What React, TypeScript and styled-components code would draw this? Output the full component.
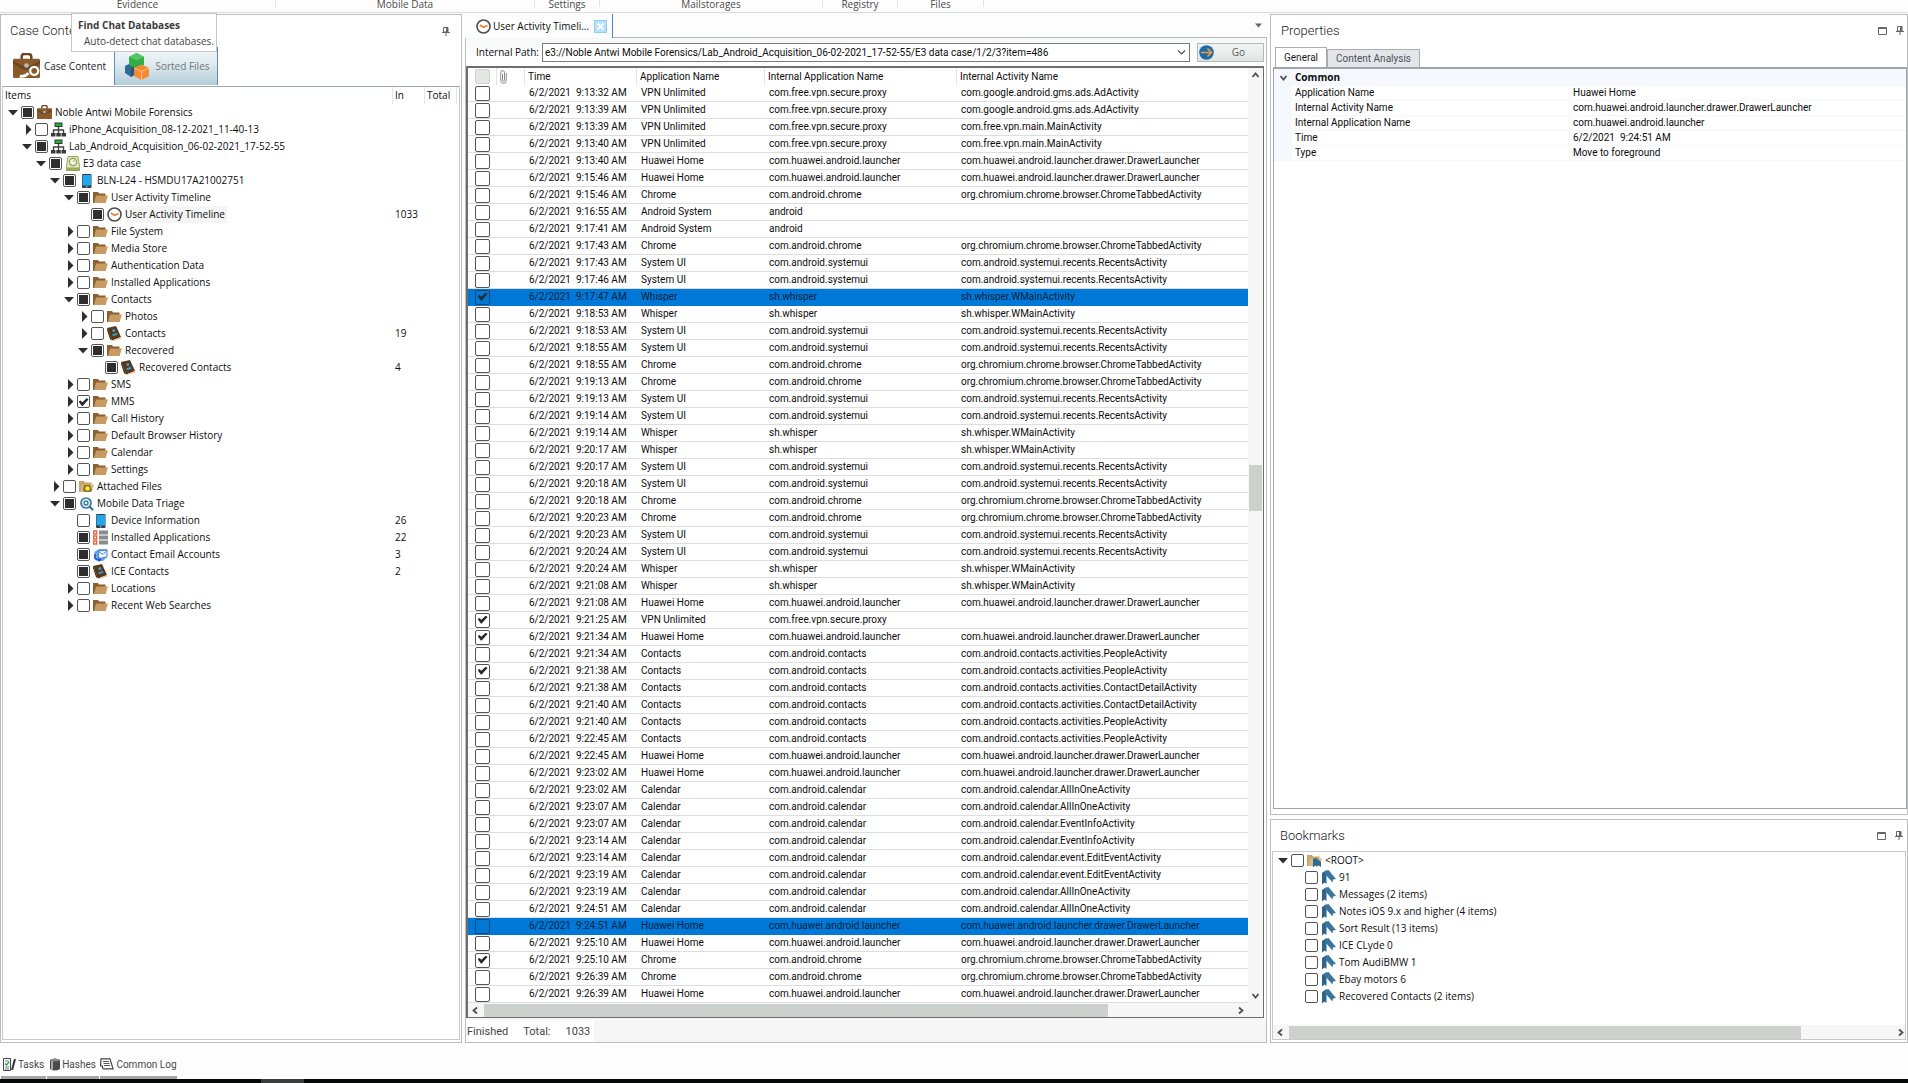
import React, { useEffect, useRef } from 'react';
import styled, { createGlobalStyle, css } from 'styled-components';

const uiFont = '"Open Sans", "Noto Sans", sans-serif';
const gridFont = 'Roboto, "Open Sans", sans-serif';

const GlobalStyle = createGlobalStyle`
  *, *::before, *::after { box-sizing: border-box; }
  body { margin: 0; background: #fdfdfd; color: #0c0c0c; font: 10px/17px ${uiFont}; }
  button, select, input { font: inherit; color: inherit; margin: 0; padding: 0; }
  button { background: none; border: 0; display: flex; align-items: center; justify-content: center; white-space: nowrap; }
  table { border-collapse: separate; border-spacing: 0; }
  ul { list-style: none; margin: 0; padding: 0; }
`;

/* ---------- shell ---------- */

const Page = styled.div`
  min-height: 100vh;
  display: flex;
  flex-direction: column;
  position: relative;
`;

const Ribbon = styled.nav`
  height: 13px;
  display: flex;
  border-bottom: 1px solid #dcdcdc;
`;

const RibbonGroup = styled.div<{ $w: number }>`
  width: ${p => p.$w}px;
  height: 7px;
  border-right: 1px solid #e2e2e2;
  text-align: center;
  line-height: 8px;
  color: #4c4c4c;
`;

const Main = styled.main`
  flex: 1;
  display: grid;
  grid-template-columns: 462px minmax(0, 1fr) 638px;
  column-gap: 3px;
  padding-top: 1px;
`;

const Panel = styled.section`
  display: flex;
  flex-direction: column;
  border: 1px solid #bdbdbd;
  padding: 0 1px 2px;
  background: #fff;
  min-height: 0;
`;

const PanelHead = styled.header<{ $wide?: boolean }>`
  height: ${p => (p.$wide ? 32 : 31)}px;
  display: flex;
  align-items: center;
  gap: 9px;
  padding: 0 ${p => (p.$wide ? 10 : 3)}px 0 8px;
`;

const PanelTitle = styled.h2`
  flex: 1;
  margin: 0;
  font: 300 13px/20px ${gridFont};
  color: #222;
`;

const Tooltip = styled.div`
  position: absolute;
  left: 71px;
  top: 13px;
  width: 146px;
  height: 39px;
  padding: 3px 6px;
  background: #fff;
  border: 1px solid #c6c6c6;
  color: #444;
  white-space: nowrap;
  strong { display: block; line-height: 16px; color: #3c3c3c; }
  span { display: block; padding-left: 6px; }
`;

/* ---------- check box ---------- */

const Box = styled.input<{ $w: number; $partial?: boolean; $onBlue?: boolean }>`
  appearance: none;
  flex: none;
  display: block;
  width: ${p => p.$w}px;
  height: ${p => (p.$w > 13 ? 15 : 13)}px;
  border: 1px solid ${p => (p.$onBlue ? '#1d4566' : '#555')};
  border-radius: 2px;
  background: ${p => (p.$onBlue ? 'transparent' : '#fff')};
  &:disabled { background: #e4e8e5; border-color: #cfd3d0; }
  &:checked::before {
    content: '';
    display: block;
    width: 10px;
    height: 8px;
    margin: 2px auto;
    background: #2a2a2a;
    clip-path: polygon(0 45%, 20% 30%, 38% 52%, 84% 0, 100% 18%, 42% 100%, 34% 100%);
  }
  ${p => p.$partial && css`
    &::before {
      content: '';
      display: block;
      width: 9px;
      height: 9px;
      margin: 1px auto;
      background: #2e2e2e;
    }
  `}
`;

type State = 'off' | 'on' | 'part';

function Check({ state = 'off', w = 13, id, label, onBlue, disabled }: {
  state?: State; w?: number; id?: string; label?: string; onBlue?: boolean; disabled?: boolean;
}) {
  const ref = useRef<HTMLInputElement>(null);
  useEffect(() => { if (ref.current) ref.current.indeterminate = state === 'part'; }, [state]);
  return (
    <Box ref={ref} type="checkbox" id={id} aria-label={label} $w={w} $partial={state === 'part'}
      $onBlue={onBlue} defaultChecked={state === 'on'} disabled={disabled} />
  );
}

/* ---------- icons ---------- */

const Svg = styled.svg`display: block; flex: none;`;

const Case = ({ size = 15 }: { size?: number }) => (
  <Svg width={size} height={size} viewBox="0 0 28 28">
    <path d="M9 7V4q0-3 3-3h4q3 0 3 3v3" fill="none" stroke="#6b4423" strokeWidth="2.6" />
    <rect x="0" y="6" width="28" height="20" rx="1.5" fill="#8a5a2b" />
    <path d="M0 8l11 6h6l11-6v3l-11 6H11L0 11z" fill="#6b4423" />
    <circle cx="14" cy="13" r="2.4" fill="#b8b8b8" />
    {size > 20 && <path d="M7 24q5 1 9-3" stroke="#fff" strokeWidth="3" fill="none" />}
    {size > 20 && <circle cx="22" cy="18.500" r="4.200" fill="#8a5a2b" stroke="#fff" strokeWidth="2.400" />}
  </Svg>
);

const Cubes = () => (
  <Svg width="24" height="27" viewBox="0 0 24 27">
    <path d="M0 13l6-3 6 3v7l-6 4-6-4z" fill="#2f6a94" />
    <path d="M6 15l6-3v8l-6 4z" fill="#24557a" />
    <path d="M4 4l7.500-4L19 4v8l-7.500 4L4 12z" fill="#35ad46" />
    <path d="M4 4l7.500 3.500L19 4l-7.500-4z" fill="#52c660" />
    <path d="M9 15l7.500-3.500L24 15v8l-7.500 4L9 23z" fill="#f58a32" />
    <path d="M9 15l7.500 3.500L24 15M16.500 18.500V27" stroke="#ffc08a" fill="none" />
  </Svg>
);

const Network = () => (
  <Svg width="15" height="15" viewBox="0 0 15 15">
    <path d="M7.500 4v4M2.500 11V8h10v3M7.500 8v3" stroke="#444" strokeWidth="1.400" fill="none" />
    <rect x="4" y="1" width="7" height="3.500" fill="#19b52b" stroke="#333" />
    <path d="M0 11h4.500v3.500H0zM5.300 11h4.500v3.500H5.300zM10.500 11H15v3.500h-4.500z" fill="#3a3a3a" />
  </Svg>
);

const Disk = () => (
  <Svg width="14" height="15" viewBox="0 0 14 15">
    <path d="M2 .500h10l1.500 10v4H.500v-4z" fill="#dfe6bd" stroke="#96a85a" />
    <path d="M.500 11.500h13v3H.500z" fill="#9cab5f" />
    <circle cx="7" cy="6" r="3.600" fill="#f4f6e6" stroke="#8fa252" strokeWidth="1.200" />
    <path d="M7 6l2-2.500" stroke="#8fa252" />
  </Svg>
);

const Phone = () => (
  <Svg width="15" height="15" viewBox="0 0 15 15">
    <rect x="3" y="1" width="9.500" height="14" rx="1" fill="#33404a" />
    <rect x="3.500" y="2" width="8.500" height="10.500" fill="#22a6ee" />
    <circle cx="7.700" cy="13.700" r=".7" fill="#c9d6de" />
  </Svg>
);

const Folder = ({ mark }: { mark?: 'star' | 'book' }) => (
  <Svg width="15" height="13" viewBox="0 0 15 13">
    <path d="M0 1h5l1 1.500h6.500V12H0z" fill={mark ? '#c9a36e' : '#8b5f33'} />
    <path d="M3 4.500h12L12.500 12H1z" fill={mark ? '#d9b885' : '#c79b62'} />
    {mark === 'star' && <path d="M5 5h6l2 5-2 2H6L4 10z" fill="#7d7138" />}
    {mark === 'star' && <circle cx="8.500" cy="8.500" r="2.300" fill="#f4ee1b" />}
    {mark === 'book' && <path d="M6 5l3-1 5 4v5l-3-2-1 2-2-2-1 2H6z" fill="#2f6c91" />}
  </Svg>
);

const Clock = () => (
  <Svg width="15" height="15" viewBox="0 0 15 15">
    <circle cx="7.500" cy="7.500" r="6.500" fill="#fff" stroke="#4c4c4c" strokeWidth="1.600" />
    <path d="M3.800 6l3.700 2.300L11.500 6.500" fill="none" stroke="#ef7d2d" strokeWidth="1.600" />
  </Svg>
);

const Book = () => (
  <Svg width="15" height="15" viewBox="0 0 15 15">
    <path d="M0 2L9 0l5 11-9 3.500z" fill="#5b3717" />
    <path d="M5 14.500l9-3.500.500 1.500-9 2.500z" fill="#d8c7a9" />
    <path d="M0 2l5 12.500L3 13 0 4z" fill="#39210c" />
    <circle cx="6.800" cy="4.500" r="1.600" fill="#2aa0cf" />
    <path d="M5 8.500l4.800-1.800.7 2-4.500 1.500z" fill="#2aa0cf" />
  </Svg>
);

const Search = () => (
  <Svg width="14" height="14" viewBox="0 0 14 14">
    <circle cx="6" cy="6" r="5" fill="#e7f2f8" stroke="#36789c" strokeWidth="1.700" />
    <circle cx="6" cy="6" r="2" fill="none" stroke="#36789c" strokeWidth="1.300" />
    <path d="M9.500 9.500L13 13" stroke="#36789c" strokeWidth="2.400" />
  </Svg>
);

const Apps = () => (
  <Svg width="15" height="15" viewBox="0 0 15 15">
    <path d="M.700 1h3v3h-3zM.700 6h3v3h-3zM.700 11h3v3h-3z" fill="#fff" stroke="#ee6039" strokeWidth="1.300" />
    <path d="M6 .500h9v4H6zM6 5.500h9v4H6zM6 10.500h9v4H6z" fill="#8b8b8b" />
  </Svg>
);

const Mail = () => (
  <Svg width="14" height="14" viewBox="0 0 14 14">
    <path d="M0 4l5-3 8 0v8l-4 4-7-1z" fill="#6ea6e6" />
    <path d="M4 3l9-1v7l-8 1.500z" fill="#f2f8ff" stroke="#3f7fd1" />
    <path d="M4.500 3.500L9 6.500l4-4" fill="none" stroke="#3f7fd1" />
    <path d="M1 6v4q1 2 4 2" fill="none" stroke="#1d5ed0" strokeWidth="1.800" />
    <path d="M4.500 9.500L8 12l-3.500 2z" fill="#1d5ed0" />
  </Svg>
);

const Ribbons = () => (
  <Svg width="14" height="15" viewBox="0 0 14 15">
    <path d="M0 3L4.500 0v14L2.500 12.500 0 14.500z" fill="#2d6487" />
    <path d="M3 1L6.500 0 14 9l-3 .500-.500 3L3 4z" fill="#3a769b" />
  </Svg>
);

const Pin = () => (
  <Svg width="8" height="9" viewBox="0 0 8 9">
    <path d="M1.500 .500h4.500v4.500H1.500zM0 5.500h8M4 5.500V9" fill="none" stroke="#666" />
    <path d="M4 .500h2V5H4z" fill="#666" />
  </Svg>
);

const Float = () => (
  <Svg width="9" height="8" viewBox="0 0 9 8">
    <path d="M.500 .500h8v7h-8zM.500 1.500h8" fill="none" stroke="#666" />
  </Svg>
);

const Clip = () => (
  <Svg width="7" height="14" viewBox="0 0 7 14">
    <path d="M2.500 4v6q0 1.200 1 1.200t1-1.200V2.500Q4.500.700 2.600.700T.700 2.500v8q0 2.800 2.800 2.800t2.800-2.800V3" fill="none" stroke="#8a8a8a" />
  </Svg>
);

const GoArrow = () => (
  <Svg width="15" height="15" viewBox="0 0 15 15">
    <circle cx="7.500" cy="7.500" r="7.300" fill="#1c6aa8" />
    <path d="M2 7.500h10M8.500 3.500l4 4-4 4" fill="none" stroke="#f59a3c" strokeWidth="1.700" />
  </Svg>
);

const turns = { up: 180, down: 0, left: 90, right: -90 };

const Chevron = ({ dir, strong }: { dir: keyof typeof turns; strong?: boolean }) => (
  <Svg width="9" height="9" viewBox="0 0 9 9">
    <path d={strong ? 'M1.500 3l3 3.500 3-3.500' : 'M1 2.500l3.500 3.500 3.500-3.500'} transform={`rotate(${turns[dir]} 4.500 4.500)`} fill="none" stroke="#505050" strokeWidth={strong ? 1.8 : 1.1} />
  </Svg>
);

const Triangle = ({ open }: { open: boolean }) => (
  <Svg width="10" height="11" viewBox="0 0 10 11">
    <path d={open ? 'M0 3h10L5 8.500z' : 'M4 0l5.500 5.500L4 11z'} fill="#2e2e2e" />
  </Svg>
);

const TasksIcon = () => (
  <Svg width="13" height="13" viewBox="0 0 13 13">
    <path d="M.500 .500h7v12h-7z" fill="#fff" stroke="#444" />
    <path d="M2 3h4M2 9h4M2 11h4" stroke="#777" />
    <path d="M2 5.500l1.500 1.500L6 4" stroke="#25a046" fill="none" strokeWidth="1.400" />
    <path d="M9 12l3-11" stroke="#333" strokeWidth="2" />
  </Svg>
);

const HashIcon = () => (
  <Svg width="10" height="13" viewBox="0 0 10 13">
    <path d="M0 2q5-3 10 0v9q-5 3-10 0z" fill="#4b4b4b" />
    <path d="M1 2.500q1 .500 2 .600v9l-2-.600z" fill="#a9a9a9" />
    <ellipse cx="5" cy="2" rx="4.500" ry="1.300" fill="#8b8b8b" />
  </Svg>
);

const LogIcon = () => (
  <Svg width="14" height="12" viewBox="0 0 14 12">
    <path d="M1 .800h9l3 10H4.500Q2 11 2.500 8H.500z" fill="#fff" stroke="#444" strokeWidth="1.200" />
    <path d="M3 3.500h6M3.500 5.500h6M4 7.500h6" stroke="#555" />
  </Svg>
);

const icons: Record<string, React.ReactNode> = {
  case: <Case />, net: <Network />, disk: <Disk />, phone: <Phone />, folder: <Folder />,
  clock: <Clock />, book: <Book />, attach: <Folder mark="star" />, search: <Search />,
  apps: <Apps />, mail: <Mail />, root: <Folder mark="book" />, ribbon: <Ribbons />,
};

/* ---------- trees ---------- */

const TreeRow = styled.li<{ $level: number }>`
  height: 17px;
  display: flex;
  align-items: center;
  padding-left: ${p => p.$level * 14}px;
  white-space: nowrap;
`;

const Twisty = styled.button`
  width: 10px;
  height: 11px;
  margin: 0 3px 0 5px;
`;

const IconCell = styled.span`
  width: 15px;
  margin: 0 3px;
  display: flex;
  justify-content: center;
`;

const NodeLabel = styled.label<{ $current?: boolean }>`
  padding-right: 2px;
  background: ${p => (p.$current ? '#f5f5f5' : 'none')};
`;

const Count = styled.span`
  margin-left: auto;
  width: 64px;
`;

type Node = { level: number; open: 'y' | 'n' | '-'; state: State; icon: string; text: string; count?: string };

const caseTree: Node[] = [
  { level: 0, open: 'y', state: 'part', icon: 'case', text: 'Noble Antwi Mobile Forensics' },
  { level: 1, open: 'n', state: 'off', icon: 'net', text: 'iPhone_Acquisition_08-12-2021_11-40-13' },
  { level: 1, open: 'y', state: 'part', icon: 'net', text: 'Lab_Android_Acquisition_06-02-2021_17-52-55' },
  { level: 2, open: 'y', state: 'part', icon: 'disk', text: 'E3 data case' },
  { level: 3, open: 'y', state: 'part', icon: 'phone', text: 'BLN-L24 - HSMDU17A21002751' },
  { level: 4, open: 'y', state: 'part', icon: 'folder', text: 'User Activity Timeline' },
  { level: 5, open: '-', state: 'part', icon: 'clock', text: 'User Activity Timeline', count: '1033' },
  { level: 4, open: 'n', state: 'off', icon: 'folder', text: 'File System' },
  { level: 4, open: 'n', state: 'off', icon: 'folder', text: 'Media Store' },
  { level: 4, open: 'n', state: 'off', icon: 'folder', text: 'Authentication Data' },
  { level: 4, open: 'n', state: 'off', icon: 'folder', text: 'Installed Applications' },
  { level: 4, open: 'y', state: 'part', icon: 'folder', text: 'Contacts' },
  { level: 5, open: 'n', state: 'off', icon: 'folder', text: 'Photos' },
  { level: 5, open: 'n', state: 'off', icon: 'book', text: 'Contacts', count: '19' },
  { level: 5, open: 'y', state: 'part', icon: 'folder', text: 'Recovered' },
  { level: 6, open: '-', state: 'part', icon: 'book', text: 'Recovered Contacts', count: '4' },
  { level: 4, open: 'n', state: 'off', icon: 'folder', text: 'SMS' },
  { level: 4, open: 'n', state: 'on', icon: 'folder', text: 'MMS' },
  { level: 4, open: 'n', state: 'off', icon: 'folder', text: 'Call History' },
  { level: 4, open: 'n', state: 'off', icon: 'folder', text: 'Default Browser History' },
  { level: 4, open: 'n', state: 'off', icon: 'folder', text: 'Calendar' },
  { level: 4, open: 'n', state: 'off', icon: 'folder', text: 'Settings' },
  { level: 3, open: 'n', state: 'off', icon: 'attach', text: 'Attached Files' },
  { level: 3, open: 'y', state: 'part', icon: 'search', text: 'Mobile Data Triage' },
  { level: 4, open: '-', state: 'off', icon: 'phone', text: 'Device Information', count: '26' },
  { level: 4, open: '-', state: 'part', icon: 'apps', text: 'Installed Applications', count: '22' },
  { level: 4, open: '-', state: 'part', icon: 'mail', text: 'Contact Email Accounts', count: '3' },
  { level: 4, open: '-', state: 'part', icon: 'book', text: 'ICE Contacts', count: '2' },
  { level: 4, open: 'n', state: 'off', icon: 'folder', text: 'Locations' },
  { level: 4, open: 'n', state: 'off', icon: 'folder', text: 'Recent Web Searches' },
];

const bookmarkTree: Node[] = [
  { level: 0, open: 'y', state: 'off', icon: 'root', text: '<ROOT>' },
  ...['91', 'Messages (2 items)', 'Notes iOS 9.x and higher (4 items)', 'Sort Result (13 items)', 'ICE CLyde 0',
    'Tom AudiBMW 1', 'Ebay motors 6', 'Recovered Contacts (2 items)'].map(
    (text): Node => ({ level: 1, open: '-', state: 'off', icon: 'ribbon', text })),
];

function Tree({ nodes, name }: { nodes: Node[]; name: string }) {
  return (
    <ul>
      {nodes.map((n, i) => (
        <TreeRow key={i} $level={n.level}>
          <Twisty as={n.open === '-' ? 'span' : 'button'} aria-label={n.open === '-' ? undefined : `Toggle ${n.text}`}>
            {n.open !== '-' && <Triangle open={n.open === 'y'} />}
          </Twisty>
          <Check id={`${name}-${i}`} state={n.state} />
          <IconCell>{icons[n.icon]}</IconCell>
          <NodeLabel htmlFor={`${name}-${i}`} $current={n.icon === 'clock'}>{n.text}</NodeLabel>
          {n.count && <Count>{n.count}</Count>}
        </TreeRow>
      ))}
    </ul>
  );
}

/* ---------- left panel ---------- */

const ViewTabs = styled.div`
  height: 39px;
  display: flex;
  padding-left: 8px;
`;

const ViewTab = styled.button<{ $active?: boolean }>`
  height: 38px;
  width: 104px;
  gap: ${p => (p.$active ? 4 : 6)}px;
  padding-left: 3px;
  color: ${p => (p.$active ? '#1c1c1c' : '#6f787d')};
  ${p => p.$active && css`justify-content: flex-start;`}
  ${p => !p.$active && css`
    border: solid #5c8db5;
    border-width: 0 1px;
    background: linear-gradient(#f4f8fa, #dfeaef 45%, #b3cdd9);
  `}
`;

const TreeFrame = styled.div`
  flex: 1;
  border: 1px solid;
  border-color: #9fa8ae #c9c9c9 #c9c9c9;
`;

const TreeHead = styled.div`
  height: 17px;
  display: grid;
  grid-template-columns: minmax(0, 1fr) 32px 32px;
  padding-right: 2px;
  span { padding-left: 2px; border-right: 1px solid #e6e6e6; }
`;

/* ---------- middle panel ---------- */

const Center = styled.section`
  display: flex;
  flex-direction: column;
  min-width: 0;
`;

const DocTabs = styled.div`
  height: 24px;
  display: flex;
`;

const DocTab = styled.div`
  width: 148px;
  display: flex;
  align-items: center;
  gap: 2px;
  padding: 0 5px 0 11px;
  border-right: 1px solid #4f86b8;
`;

const DocClose = styled.button`
  margin-left: auto;
  width: 13px;
  height: 13px;
  background: #b9e1f8;
  border: 1px solid #8fcdf0;
`;

const DocRest = styled.div`
  flex: 1;
  display: flex;
  justify-content: flex-end;
  align-items: center;
  padding-right: 5px;
  border-bottom: 1px solid #b5b5b5;
`;

const Doc = styled.div`
  flex: 1;
  display: flex;
  flex-direction: column;
  border: solid #bdbdbd;
  border-width: 0 1px 1px;
  background: #fff;
`;

const PathBar = styled.div`
  height: 28px;
  display: flex;
  align-items: center;
  gap: 7px;
  padding: 0 2px 0 10px;
  background: linear-gradient(#f7f9f8, #fff);
  label { width: 59px; white-space: nowrap; }
`;

const PathField = styled.div`
  flex: 1;
  display: grid;
  align-items: center;
  > * { grid-area: 1 / 1; }
  > svg { justify-self: end; margin-right: 4px; pointer-events: none; }
`;

const PathSelect = styled.select`
  appearance: none;
  width: 100%;
  height: 19px;
  padding: 0 2px;
  border: 1px solid #7b7b7b;
  border-radius: 0;
  background: #fff;
  && { font-family: ${gridFont}; }
`;

const GoButton = styled.button`
  && { justify-content: flex-start; }
  width: 67px;
  height: 19px;
  padding-left: 1px;
  border: 1px solid #b4b8b6;
  background: linear-gradient(#f1f5f3, #e0e4e2);
  color: #5c5c5c;
  span { flex: 1; }
`;

const GridFrame = styled.div`
  flex: 1;
  display: grid;
  grid-template-columns: minmax(0, 1fr) 15px;
  grid-template-rows: 1fr 14px;
  margin: 0 2px 0 0;
  border: solid #6e6e6e;
  border-width: 2px 1px 1px 2px;
`;

const DataTable = styled.table`
  width: 100%;
  table-layout: fixed;
  font: 10px/16px ${gridFont};
  align-self: start;
  th { height: 17px; padding: 0 0 0 3px; text-align: left; font-weight: 400; border-right: 1px solid #e4e4e4; }
  th:last-child { border-right: 0; }
  td { height: 17px; padding: 0 0 0 4px; white-space: pre; border-bottom: 1px solid #dedede; }
  th:first-child, td:first-child { padding-left: 7px; }
`;

const DataRow = styled.tr<{ $selected: boolean }>`
  ${p => p.$selected && css`background: #0078d7; color: #04223c; td { border-color: #0078d7; }`}
`;

const VScroll = styled.div`
  display: flex;
  flex-direction: column;
  align-items: center;
  justify-content: space-between;
  background: #f6f6f6;
  padding: 3px 0;
`;

const VThumb = styled.div`
  width: 13px;
  height: 46px;
  margin-top: auto;
  background: #cdd1ce;
`;

const VSpace = styled.div`height: 480px;`;

const HScroll = styled.div<{ $end?: number }>`
  grid-column: 1 / -1;
  height: 14px;
  display: flex;
  align-items: center;
  gap: 4px;
  padding: 0 ${p => p.$end ?? 0}px 0 3px;
  background: #f6f6f6;
`;

const HThumb = styled.div<{ $share: number }>`
  flex: ${p => p.$share} 1 0;
  height: 13px;
  background: #cdd1ce;
`;

const HSpace = styled.div<{ $share: number }>`flex: ${p => p.$share} 1 0;`;

const Status = styled.div`
  height: 24px;
  display: flex;
  padding-top: 2px;
  background: #f6f6f6;
`;

const StatusText = styled.div`
  display: flex;
  align-items: center;
  gap: 15px;
  padding: 0 4px 0 1px;
  background: #fff;
  font: 11px/17px ${gridFont};
  color: #444;
`;

const L = 'com.huawei.android.launcher';
const apps: Record<string, [string, string, string]> = {
  va: ['VPN Unlimited', 'com.free.vpn.secure.proxy', 'com.google.android.gms.ads.AdActivity'],
  vm: ['VPN Unlimited', 'com.free.vpn.secure.proxy', 'com.free.vpn.main.MainActivity'],
  v: ['VPN Unlimited', 'com.free.vpn.secure.proxy', ''],
  h: ['Huawei Home', L, `${L}.drawer.DrawerLauncher`],
  c: ['Chrome', 'com.android.chrome', 'org.chromium.chrome.browser.ChromeTabbedActivity'],
  a: ['Android System', 'android', ''],
  s: ['System UI', 'com.android.systemui', 'com.android.systemui.recents.RecentsActivity'],
  w: ['Whisper', 'sh.whisper', 'sh.whisper.WMainActivity'],
  p: ['Contacts', 'com.android.contacts', 'com.android.contacts.activities.PeopleActivity'],
  d: ['Contacts', 'com.android.contacts', 'com.android.contacts.activities.ContactDetailActivity'],
  ka: ['Calendar', 'com.android.calendar', 'com.android.calendar.AllInOneActivity'],
  ki: ['Calendar', 'com.android.calendar', 'com.android.calendar.EventInfoActivity'],
  ke: ['Calendar', 'com.android.calendar', 'com.android.calendar.event.EditEventActivity'],
};

/* time, app key, then "x" for ticked and "s" for selected */
const events = `13:32 va|13:39 va|13:39 vm|13:40 vm|13:40 h|15:46 h|15:46 c|16:55 a|17:41 a|17:43 c|17:43 s|17:46 s|17:47 w xs
18:53 w|18:53 s|18:55 s|18:55 c|19:13 c|19:13 s|19:14 s|19:14 w|20:17 w|20:17 s|20:18 s|20:18 c|20:23 c|20:23 s|20:24 s
20:24 w|21:08 w|21:08 h|21:25 v x|21:34 h x|21:34 p|21:38 p x|21:38 d|21:40 d|21:40 p|22:45 p|22:45 h|23:02 h|23:02 ka
23:07 ka|23:07 ki|23:14 ki|23:14 ke|23:19 ke|23:19 ka|24:51 ka|24:51 h s|25:10 h|25:10 c x|26:39 c|26:39 h`
  .split(/[|\n]/)
  .map(line => {
    const [time, app, flags = ''] = line.split(' ');
    return { time: `6/2/2021  9:${time} AM`, cells: apps[app], ticked: flags.includes('x'), selected: flags.includes('s') };
  });

/* ---------- right column ---------- */

const Side = styled.div`
  display: flex;
  flex-direction: column;
  gap: 4px;
  min-height: 0;
`;

const GrowPanel = styled(Panel)`flex: 1; padding: 0 0 5px 2px;`;
const BookPanel = styled(Panel)`height: 224px;`;

const PropTabs = styled.div`
  height: 21px;
  display: flex;
  align-items: flex-end;
  padding-left: 2px;
`;

const PropTab = styled.button<{ $active?: boolean }>`
  height: ${p => (p.$active ? 20 : 18)}px;
  padding: 0 8px;
  border: 1px solid #a9adb3;
  border-bottom: 0;
  background: ${p => (p.$active ? '#fff' : '#e3e5e9')};
  color: ${p => (p.$active ? '#1c1c1c' : '#4e5157')};
  && { font-family: ${gridFont}; }
`;

const PropFrame = styled.div`
  flex: 1;
  border: 1px solid #9ea5ac;
  border-top-width: 2px;
`;

const PropTable = styled.table`
  width: 100%;
  table-layout: fixed;
  font: 10px/14px ${gridFont};
  th, td { height: 15px; padding: 0 0 0 3px; font-weight: 400; text-align: left; white-space: pre; border-bottom: 1px solid #f4f8fd; }
  td:first-child, thead th { background: #f5f9fe; }
  thead th { height: 17px; font: 700 10px/16px ${uiFont}; }
  tbody th { border-right: 1px solid #f4f8fd; }
  button { margin-left: 2px; }
`;

const BookFrame = styled.div`
  flex: 1;
  display: flex;
  flex-direction: column;
  border: 1px solid #c9c9c9;
  ul { flex: 1; }
`;

const properties = [
  ['Application Name', 'Huawei Home'],
  ['Internal Activity Name', `${L}.drawer.DrawerLauncher`],
  ['Internal Application Name', L],
  ['Time', '6/2/2021  9:24:51 AM'],
  ['Type', 'Move to foreground'],
];

/* ---------- footer ---------- */

const Dock = styled.footer`
  height: 36px;
  display: flex;
  gap: 1px;
  padding-left: 1px;
`;

const DockTab = styled.button<{ $w: number }>`
  && { font-family: ${gridFont}; }
  width: ${p => p.$w}px;
  padding-top: 9px;
  gap: 2px;
  border-bottom: 3px solid #a6a6a6;
  color: #4a4a4a;
`;

const Taskbar = styled.div`
  height: 4px;
  padding-left: 261px;
  background: #050a08;
  &::before { content: ''; display: block; width: 43px; height: 4px; background: #3a3d3c; }
`;

const ribbonGroups: [string, number][] = [
  ['Evidence', 276], ['Mobile Data', 259], ['Settings', 65], ['Mailstorages', 223], ['Registry', 75], ['Files', 86],
];

export default function App() {
  return (
    <Page>
      <GlobalStyle />
      <Ribbon>
        {ribbonGroups.map(([name, w]) => <RibbonGroup key={name} $w={w}>{name}</RibbonGroup>)}
      </Ribbon>

      <Main>
        <Panel>
          <PanelHead $wide>
            <PanelTitle>Case Content</PanelTitle>
            <button aria-label="Pin case content"><Pin /></button>
          </PanelHead>
          <ViewTabs>
            <ViewTab $active><Case size={27} />Case Content</ViewTab>
            <ViewTab><Cubes />Sorted Files</ViewTab>
          </ViewTabs>
          <TreeFrame>
            <TreeHead><span>Items</span><span>In</span><span>Total</span></TreeHead>
            <Tree nodes={caseTree} name="case" />
          </TreeFrame>
        </Panel>

        <Center>
          <DocTabs>
            <DocTab>
              <Clock />User Activity Timeli...
              <DocClose aria-label="Close tab">
                <Svg width="7" height="7" viewBox="0 0 7 7"><path d="M.500 .500l6 6M6.500 .500l-6 6" stroke="#fff" strokeWidth="1.600" /></Svg>
              </DocClose>
            </DocTab>
            <DocRest>
              <button aria-label="Tab list">
                <Svg width="7" height="5" viewBox="0 0 7 5"><path d="M0 .500h7L3.500 4.500z" fill="#666" /></Svg>
              </button>
            </DocRest>
          </DocTabs>
          <Doc>
            <PathBar>
              <label htmlFor="path">Internal Path:</label>
              <PathField>
                <PathSelect id="path">
                  <option>e3://Noble Antwi Mobile Forensics/Lab_Android_Acquisition_06-02-2021_17-52-55/E3 data case/1/2/3?item=486</option>
                </PathSelect>
                <Chevron dir="down" />
              </PathField>
              <GoButton><GoArrow /><span>Go</span></GoButton>
            </PathBar>
            <GridFrame>
              <DataTable>
                <colgroup>
                  <col width="29" /><col width="28" /><col width="112" /><col width="128" /><col width="192" /><col />
                </colgroup>
                <thead>
                  <tr>
                    <th><Check w={15} label="Select all" disabled /></th>
                    <th><Clip /></th>
                    <th>Time</th>
                    <th>Application Name</th>
                    <th>Internal Application Name</th>
                    <th>Internal Activity Name</th>
                  </tr>
                </thead>
                <tbody>
                  {events.map((e, i) => (
                    <DataRow key={i} $selected={e.selected}>
                      <td><Check w={15} state={e.ticked ? 'on' : 'off'} onBlue={e.selected} label={`Select ${e.time} ${e.cells[0]}`} /></td>
                      <td />
                      <td>{e.time}</td>
                      {e.cells.map((c, k) => <td key={k}>{c}</td>)}
                    </DataRow>
                  ))}
                </tbody>
              </DataTable>
              <VScroll>
                <button aria-label="Scroll up"><Chevron dir="up" strong /></button>
                <VThumb />
                <VSpace />
                <button aria-label="Scroll down"><Chevron dir="down" strong /></button>
              </VScroll>
              <HScroll $end={18}>
                <button aria-label="Scroll left"><Chevron dir="left" strong /></button>
                <HThumb $share={627} />
                <HSpace $share={121} />
                <button aria-label="Scroll right"><Chevron dir="right" strong /></button>
              </HScroll>
            </GridFrame>
            <Status>
              <StatusText><span>Finished</span><span>Total:</span><span>1033</span></StatusText>
            </Status>
          </Doc>
        </Center>

        <Side>
          <GrowPanel>
            <PanelHead>
              <PanelTitle>Properties</PanelTitle>
              <button aria-label="Float properties"><Float /></button>
              <button aria-label="Pin properties"><Pin /></button>
            </PanelHead>
            <PropTabs>
              <PropTab $active>General</PropTab>
              <PropTab>Content Analysis</PropTab>
            </PropTabs>
            <PropFrame>
              <PropTable>
                <colgroup><col width="18" /><col width="278" /><col /></colgroup>
                <thead>
                  <tr>
                    <th><button aria-label="Collapse Common"><Chevron dir="down" strong /></button></th>
                    <th colSpan={2}>Common</th>
                  </tr>
                </thead>
                <tbody>
                  {properties.map(([k, v]) => <tr key={k}><td /><th scope="row">{k}</th><td>{v}</td></tr>)}
                </tbody>
              </PropTable>
            </PropFrame>
          </GrowPanel>
          <BookPanel>
            <PanelHead>
              <PanelTitle>Bookmarks</PanelTitle>
              <button aria-label="Float bookmarks"><Float /></button>
              <button aria-label="Pin bookmarks"><Pin /></button>
            </PanelHead>
            <BookFrame>
              <Tree nodes={bookmarkTree} name="mark" />
              <HScroll>
                <button aria-label="Scroll bookmarks left"><Chevron dir="left" strong /></button>
                <HThumb $share={517} />
                <HSpace $share={88} />
                <button aria-label="Scroll bookmarks right"><Chevron dir="right" strong /></button>
              </HScroll>
            </BookFrame>
          </BookPanel>
        </Side>
      </Main>

      <Dock>
        <DockTab $w={45}><TasksIcon />Tasks</DockTab>
        <DockTab $w={52}><HashIcon />Hashes</DockTab>
        <DockTab $w={77}><LogIcon />Common Log</DockTab>
      </Dock>
      <Taskbar />

      <Tooltip role="tooltip">
        <strong>Find Chat Databases</strong>
        <span>Auto-detect chat databases.</span>
      </Tooltip>
    </Page>
  );
}
